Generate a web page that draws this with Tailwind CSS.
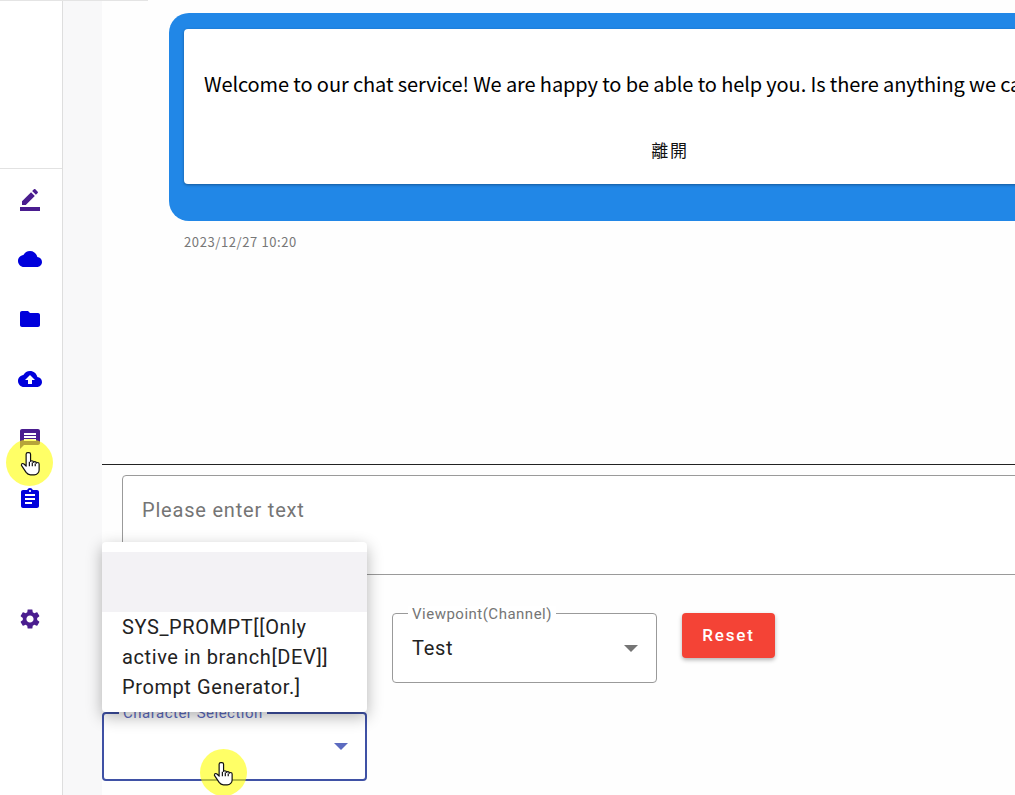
<!DOCTYPE html>
<html lang="zh-TW">
<head>
  <meta charset="UTF-8">
  <title>Chat</title>
  <script src="https://cdn.jsdelivr.net/npm/@tailwindcss/browser@4"></script>
</head>
<body class="bg-white">
  <div class="relative flex h-[795px] w-[1015px] overflow-hidden font-['Roboto','Noto_Sans_CJK_TC',sans-serif]">
    <!-- top edge line -->
    <div class="absolute left-0 top-0 z-10 h-px w-[148px] bg-[#e4e4e4]"></div>

    <!-- sidebar -->
    <aside class="w-[63px] shrink-0 border-r border-[#dedede] bg-white">
      <div class="h-[169px] border-b border-[#e2e2e2]"></div>
      <nav class="flex flex-col">
        <div class="flex h-[60px] items-center pl-[18px]">
          <svg class="h-6 w-6 text-[#4a1d8f]" viewBox="0 0 24 24" fill="currentColor"><path d="M22 24H2v-4h20v4zM13.06 5.19l3.75 3.75L7.75 18H4v-3.75l9.06-9.06zm4.82 2.68-3.75-3.75 1.83-1.83c.39-.39 1.02-.39 1.41 0l2.34 2.34c.39.39.39 1.02 0 1.41l-1.83 1.83z"/></svg>
        </div>
        <div class="flex h-[60px] items-center pl-[18px]">
          <svg class="h-6 w-6 text-[#0000dc]" viewBox="0 0 24 24" fill="currentColor"><path d="M19.35 10.04C18.67 6.59 15.64 4 12 4 9.11 4 6.6 5.64 5.35 8.04 2.34 8.36 0 10.91 0 14c0 3.31 2.69 6 6 6h13c2.76 0 5-2.24 5-5 0-2.64-2.05-4.78-4.65-4.96z"/></svg>
        </div>
        <div class="flex h-[60px] items-center pl-[18px]">
          <svg class="h-6 w-6 text-[#0000dc]" viewBox="0 0 24 24" fill="currentColor"><path d="M10 4H4c-1.1 0-1.99.9-1.99 2L2 18c0 1.1.9 2 2 2h16c1.1 0 2-.9 2-2V8c0-1.1-.9-2-2-2h-8l-2-2z"/></svg>
        </div>
        <div class="flex h-[60px] items-center pl-[18px]">
          <svg class="h-6 w-6 text-[#0000dc]" viewBox="0 0 24 24" fill="currentColor"><path d="M19.35 10.04C18.67 6.59 15.64 4 12 4 9.11 4 6.6 5.64 5.35 8.04 2.34 8.36 0 10.91 0 14c0 3.31 2.69 6 6 6h13c2.76 0 5-2.24 5-5 0-2.64-2.05-4.78-4.65-4.96zM14 13v4h-4v-4H7l5-5 5 5h-3z"/></svg>
        </div>
        <div class="flex h-[60px] items-center pl-[18px]">
          <svg class="h-6 w-6 text-[#4a1d8f]" viewBox="0 0 24 24" fill="currentColor"><path d="M20 2H4c-1.1 0-1.99.9-1.99 2L2 22l4-4h14c1.1 0 2-.9 2-2V4c0-1.1-.9-2-2-2zm-2 12H6v-2h12v2zm0-3H6V9h12v2zm0-3H6V6h12v2z"/></svg>
        </div>
        <div class="flex h-[60px] items-center pl-[18px]">
          <svg class="h-6 w-6 text-[#0000dc]" viewBox="0 0 24 24" fill="currentColor"><path d="M19 3h-4.18C14.4 1.84 13.3 1 12 1c-1.3 0-2.4.84-2.82 2H5c-1.1 0-2 .9-2 2v14c0 1.1.9 2 2 2h14c1.1 0 2-.9 2-2V5c0-1.1-.9-2-2-2zm-7 0c.55 0 1 .45 1 1s-.45 1-1 1-1-.45-1-1 .45-1 1-1zm2 14H7v-2h7v2zm3-4H7v-2h10v2zm0-4H7V7h10v2z"/></svg>
        </div>
        <div class="mt-[60px] flex h-[60px] items-center pl-[18px]">
          <svg class="h-6 w-6 text-[#4a1d8f]" viewBox="0 0 24 24" fill="currentColor"><path d="M19.14 12.94c.04-.3.06-.61.06-.94 0-.32-.02-.64-.07-.94l2.03-1.58c.18-.14.23-.41.12-.61l-1.92-3.32c-.12-.22-.37-.29-.59-.22l-2.39.96c-.5-.38-1.03-.7-1.62-.94l-.36-2.54c-.04-.24-.24-.41-.48-.41h-3.84c-.24 0-.43.17-.47.41l-.36 2.54c-.59.24-1.13.57-1.62.94l-2.39-.96c-.22-.08-.47 0-.59.22L2.74 8.87c-.12.21-.08.47.12.61l2.03 1.58c-.05.3-.09.63-.09.94s.02.64.07.94l-2.03 1.58c-.18.14-.23.41-.12.61l1.92 3.32c.12.22.37.29.59.22l2.39-.96c.5.38 1.03.7 1.62.94l.36 2.54c.05.24.24.41.48.41h3.84c.24 0 .44-.17.47-.41l.36-2.54c.59-.24 1.13-.56 1.62-.94l2.39.96c.22.08.47 0 .59-.22l1.92-3.32c.12-.22.07-.47-.12-.61l-2.01-1.58zM12 15.6c-1.98 0-3.6-1.62-3.6-3.6s1.62-3.6 3.6-3.6 3.6 1.62 3.6 3.6-1.62 3.6-3.6 3.6z"/></svg>
        </div>
      </nav>
    </aside>

    <!-- gutter -->
    <div class="w-[39px] shrink-0 bg-[#f8f8f9]"></div>

    <!-- main -->
    <main class="relative w-[913px] shrink-0 bg-[#fefefe]">
      <section class="h-[465px] border-b border-[#222222] pl-[67px] pt-[13px]">
        <div class="w-[1002px] rounded-[20px] bg-[#2187e7] pb-[37px] pl-[15px] pr-[15px] pt-[16px]">
          <div class="h-[155px] rounded bg-white shadow-[0_1px_3px_rgba(0,0,0,0.35)]">
            <p class="whitespace-nowrap pl-5 pt-[39px] font-['Noto_Sans_CJK_TC','Noto_Sans',sans-serif] text-[20px] leading-[32px] tracking-[-0.11px] text-black">Welcome to our chat service! We are happy to be able to help you. Is there anything we can help you with?</p>
            <div class="mt-[35px] text-center font-['Noto_Sans_CJK_TC',sans-serif] text-[17px] leading-[30px] tracking-[0.1em] text-[#111111]">離開</div>
          </div>
        </div>
        <div class="ml-[15px] mt-3 font-['Noto_Sans_CJK_TC',sans-serif] text-[13px] leading-[18px] tracking-[0.6px] text-[#777777]">2023/12/27 10:20</div>
      </section>

      <div class="ml-5 mt-[10px] h-[100px] w-[1000px] rounded border border-[#9a9a9a] bg-white px-[19px] pt-5 text-[20px] leading-7 tracking-[0.8px] text-[#757575]">Please enter text</div>

      <div class="mt-[38px] flex items-start">
        <div class="w-[265px] shrink-0"></div>
        <div class="relative ml-[25px] flex h-[70px] w-[265px] items-center justify-between rounded border border-[#9a9a9a] bg-white pl-[19px] pr-[18px]">
          <span class="absolute -top-[8px] left-[15px] bg-white px-1 text-[15px] leading-4 tracking-[0.5px] text-[#757575]">Viewpoint(Channel)</span>
          <span class="text-[20px] tracking-[0.7px] text-[#222222]">Test</span>
          <span class="h-0 w-0 border-x-[7px] border-t-[7px] border-x-transparent border-t-[#757575]"></span>
        </div>
        <button class="ml-[25px] h-[45px] w-[93px] rounded bg-[#f44336] text-[17px] font-medium tracking-[1.8px] text-white shadow-[0_2px_4px_rgba(0,0,0,0.3)]">Reset</button>
      </div>

      <div class="mt-[29px] flex">
        <div class="relative flex h-[69px] w-[265px] items-center justify-end rounded border-2 border-[#3f51a5] bg-white pr-[17px]">
          <span class="absolute -top-[9px] left-[15px] bg-white px-1 text-[15px] leading-4 tracking-[0.5px] text-[#5c6bc0]">Character Selection</span>
          <span class="h-0 w-0 border-x-[7px] border-t-[7px] border-x-transparent border-t-[#5c6bc0]"></span>
        </div>
      </div>

      <!-- open dropdown menu -->
      <div class="absolute left-0 top-[542px] z-10 w-[265px] rounded bg-white py-[10px] shadow-[0_5px_16px_rgba(0,0,0,0.3)]">
        <div class="h-[60px] bg-[#f3f2f5]"></div>
        <div class="px-5 text-[20px] leading-[30px] tracking-[0.6px] text-[#222222]">SYS_PROMPT[[Only active in branch[DEV]] Prompt Generator.]</div>
      </div>
    </main>

    <!-- cursor highlights -->
    <div class="absolute left-[6px] top-[439px] z-20 flex h-[47px] w-[47px] items-center justify-center rounded-full bg-[#ffff00]/60">
      <svg class="ml-[2px] mt-[2px] h-[26px] w-[26px]" viewBox="0 0 24 24" fill="#fff" stroke="#111" stroke-width="1.1" stroke-linejoin="round"><path d="M9 1.5c-.8 0-1.500.7-1.500 1.500v11l-2-2c-.7-.7-1.800-.6-2.200.2-.3.5-.2 1.100.2 1.600l4 6c1 1.400 2.300 2.200 4 2.200h3.500c2.500 0 4.500-2 4.500-4.500v-5.500c0-.8-.6-1.400-1.400-1.400-.5 0-1 .3-1.200.7 0-.9-.6-1.500-1.400-1.500-.5 0-1 .3-1.300.7 0-.9-.6-1.500-1.400-1.500-.5 0-.9.2-1.200.500V3c0-.8-.7-1.500-1.500-1.500z"/><path fill="none" d="M10.500 10v4M13.200 10.500v3.500M15.900 11.500v2.500"/></svg>
    </div>
    <div class="absolute left-[200px] top-[749px] z-20 flex h-[47px] w-[47px] items-center justify-center rounded-full bg-[#ffff00]/60">
      <svg class="ml-[1px] mt-[2px] h-[26px] w-[26px]" viewBox="0 0 24 24" fill="#fff" stroke="#111" stroke-width="1.1" stroke-linejoin="round"><path d="M9 1.5c-.8 0-1.500.7-1.500 1.500v11l-2-2c-.7-.7-1.800-.6-2.200.2-.3.5-.2 1.100.2 1.600l4 6c1 1.400 2.300 2.200 4 2.200h3.500c2.500 0 4.500-2 4.500-4.500v-5.500c0-.8-.6-1.400-1.400-1.400-.5 0-1 .3-1.200.7 0-.9-.6-1.500-1.400-1.500-.5 0-1 .3-1.300.7 0-.9-.6-1.500-1.400-1.500-.5 0-.9.2-1.200.500V3c0-.8-.7-1.500-1.500-1.500z"/><path fill="none" d="M10.500 10v4M13.200 10.500v3.500M15.900 11.500v2.500"/></svg>
    </div>
  </div>
</body>
</html>
